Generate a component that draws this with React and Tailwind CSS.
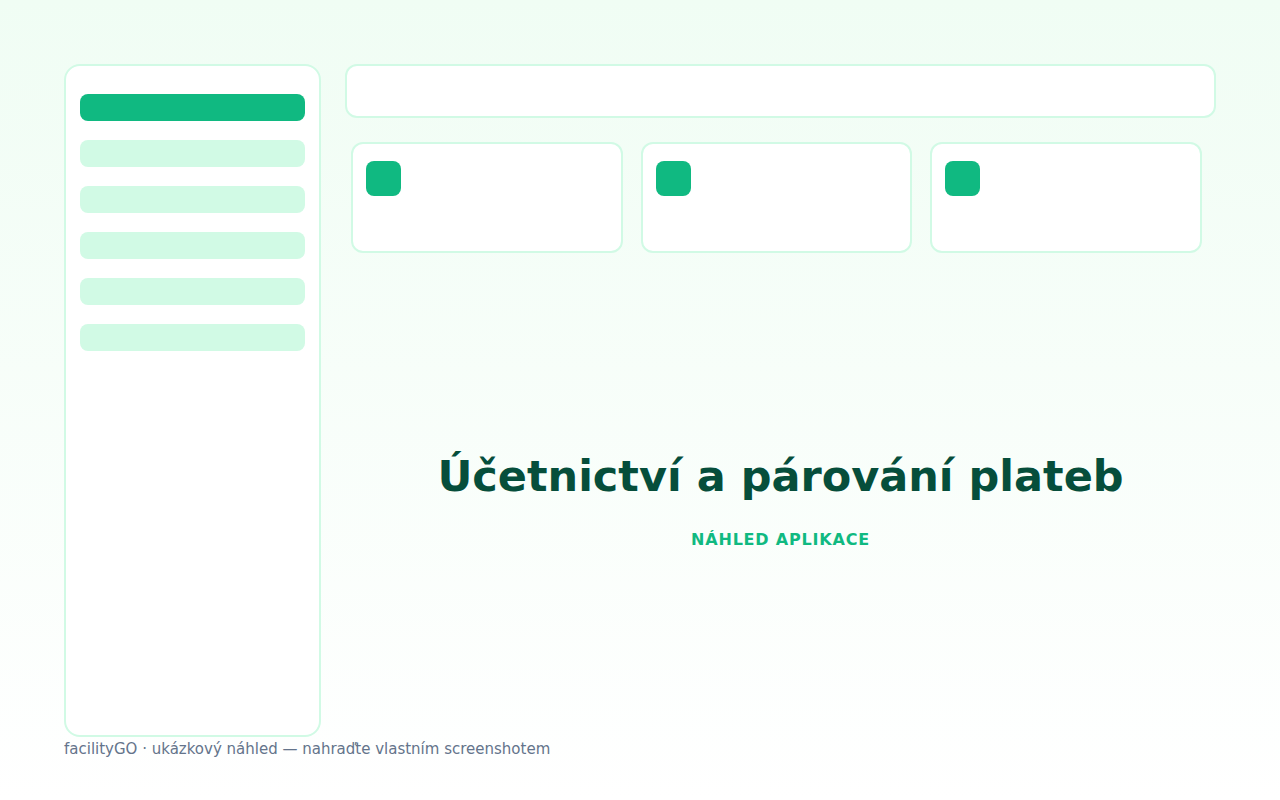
export default function App() {
  const items = [true, false, false, false, false, false];
  return (
    <div
      className="w-[1280px] h-[800px] bg-gradient-to-b from-[#f0fdf4] to-white overflow-hidden"
      style={{ fontFamily: '"DejaVu Sans", sans-serif' }}
    >
      <div className="pt-16 px-16 flex gap-6 h-[737px]">
        <div className="w-[257px] shrink-0 h-[673px] bg-white border-2 border-[#d1fae5] rounded-2xl pt-[28px] px-[14px] flex flex-col gap-[19px]">
          {items.map((a, i) => (
            <div
              key={i}
              className={`h-[27px] rounded-lg ${a ? "bg-[#10b981]" : "bg-[#d1fae5]"}`}
            />
          ))}
        </div>
        <div className="flex-1 flex flex-col">
          <div className="h-[54px] bg-white border-2 border-[#d1fae5] rounded-xl" />
          <div className="flex gap-[18px] mt-6 ml-[6px] mr-[14px]">
            {[0, 1, 2].map((i) => (
              <div
                key={i}
                className="flex-1 h-[111px] bg-white border-2 border-[#d1fae5] rounded-xl pt-[17px] pl-[13px]"
              >
                <div className="w-[35px] h-[35px] rounded-lg bg-[#10b981]" />
              </div>
            ))}
          </div>
          <div className="flex flex-col items-center mt-[197px]">
            <div className="text-[43px] font-bold text-[#064e3b] leading-[52px]">
              Účetnictví a párování plateb
            </div>
            <div className="mt-[28px] text-[16px] font-bold text-[#10b981] tracking-[0.05em] leading-[20px]">
              NÁHLED APLIKACE
            </div>
          </div>
        </div>
      </div>
      <div className="px-16 text-[15px] text-[#64748b] leading-[24px]">
        facilityGO · ukázkový náhled — nahraďte vlastním screenshotem
      </div>
    </div>
  );
}
